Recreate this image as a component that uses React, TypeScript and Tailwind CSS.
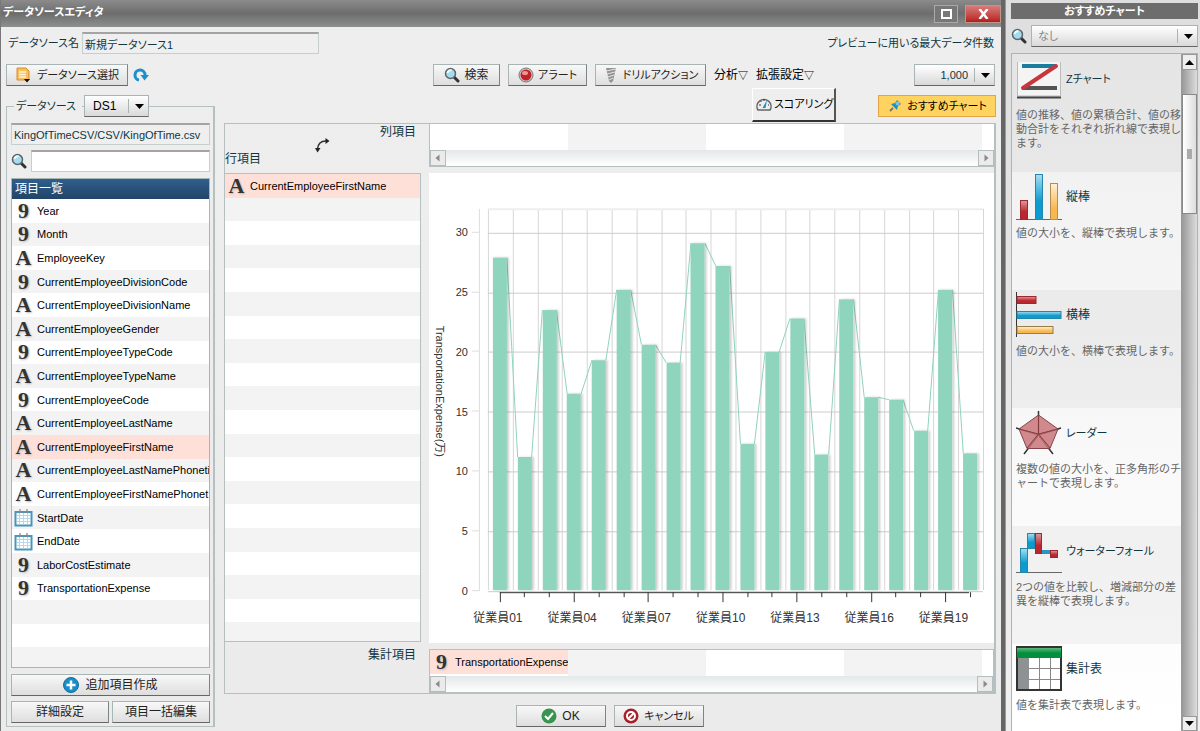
import React from "react";

interface FieldItem {
  kind: "9" | "A" | "date";
  name: string;
}

const fields: FieldItem[] = [
  { kind: "9", name: "Year" },
  { kind: "9", name: "Month" },
  { kind: "A", name: "EmployeeKey" },
  { kind: "9", name: "CurrentEmployeeDivisionCode" },
  { kind: "A", name: "CurrentEmployeeDivisionName" },
  { kind: "A", name: "CurrentEmployeeGender" },
  { kind: "9", name: "CurrentEmployeeTypeCode" },
  { kind: "A", name: "CurrentEmployeeTypeName" },
  { kind: "9", name: "CurrentEmployeeCode" },
  { kind: "A", name: "CurrentEmployeeLastName" },
  { kind: "A", name: "CurrentEmployeeFirstName" },
  { kind: "A", name: "CurrentEmployeeLastNamePhoneti" },
  { kind: "A", name: "CurrentEmployeeFirstNamePhonet" },
  { kind: "date", name: "StartDate" },
  { kind: "date", name: "EndDate" },
  { kind: "9", name: "LaborCostEstimate" },
  { kind: "9", name: "TransportationExpense" },
];

const values = [
  27.9, 11.2, 23.5, 16.5, 19.3, 25.2, 20.6, 19.1, 29.1, 27.2, 12.3, 20, 22.8,
  11.4, 24.4, 16.2, 16, 13.4, 25.2, 11.5,
];

const buttonStyle =
  "flex items-center justify-center whitespace-nowrap border border-t-[#a9b5b5] border-l-[#a9b5b5] border-r-[#7d8585] border-b-[#666] bg-linear-to-b from-[#f8f8f8] to-[#dedede] text-[#222]";
const inputStyle =
  "h-[22px] border border-t-2 border-[#c6cfcf] border-t-[#a3a3a3] px-[2px] text-[#12363f] outline-none";

function FieldIcon({ kind }: { kind: FieldItem["kind"] }) {
  if (kind === "date") {
    return (
      <svg className="w-[19px] h-[19px] shrink-0" viewBox="0 0 19 19">
        <rect x="0.5" y="3" width="18" height="15.5" fill="#4696bd" />
        <rect x="2.5" y="5" width="14" height="11.5" fill="#fff" />
        <path d="M5.5 5v11M9.5 5v11M13.5 5v11M3 7.500h13M3 10.500h13M3 13.500h13" stroke="#b4d9ea" />
        <path d="M6 1v4M13 1v4" stroke="#888" strokeWidth="2" />
        <path d="M6 1v2M13 1v2" stroke="#ddd" />
      </svg>
    );
  }
  return (
    <span className="w-[19px] shrink-0 text-center font-['Liberation_Serif',serif] text-[22px] leading-5 font-bold text-[#333] [text-shadow:1px_1px_2px_#bbb]">
      {kind}
    </span>
  );
}

function FieldRow({ item, index }: { item?: FieldItem; index: number }) {
  const selected = item?.name === "CurrentEmployeeFirstName";
  return (
    <li
      className={`flex items-center gap-1 overflow-hidden pl-[2px] text-[11px] whitespace-nowrap text-black ${
        selected ? "bg-[#ffe0d9]" : index % 2 ? "bg-[#f3f3f3]" : "bg-white"
      }`}
    >
      {item && (
        <>
          <FieldIcon kind={item.kind} />
          <span>{item.name}</span>
        </>
      )}
    </li>
  );
}

function SearchIcon() {
  return (
    <svg className="w-4 h-4 shrink-0" viewBox="0 0 16 16">
      <path d="M9.500 9.500l4.500 4.500" stroke="#333" strokeWidth="3" strokeLinecap="round" />
      <circle cx="6.500" cy="6.500" r="5" fill="#a5dbef" stroke="#5b6468" strokeWidth="1.500" />
      <path d="M3.500 6a3 3 0 0 1 4-2.500" stroke="#eefaff" strokeWidth="2" fill="none" />
    </svg>
  );
}

function Arrow({ className = "" }: { className?: string }) {
  return (
    <svg className={`w-[9px] h-[5px] shrink-0 ${className}`} viewBox="0 0 9 5">
      <path d="M0 0h9L4.500 5z" fill="currentColor" />
    </svg>
  );
}

interface DropdownProps {
  value: string;
  label: string;
  className: string;
  textClass?: string;
}

function Dropdown({ value, label, className, textClass = "" }: DropdownProps) {
  return (
    <div className={`relative flex items-center ${className}`}>
      <select
        aria-label={label}
        className={`h-[22px] w-full appearance-none border border-[#a9b5b5] border-b-[#666] bg-linear-to-b from-white to-[#d9d9d9] ${textClass}`}
      >
        <option>{value}</option>
      </select>
      <span className="pointer-events-none absolute right-[5px] flex h-[14px] items-center border-l border-[#a9b5b5] pl-[6px] text-black">
        <Arrow />
      </span>
    </div>
  );
}

function HScroll() {
  return (
    <div className="flex h-4 justify-between bg-linear-to-b from-[#e4e8e8] to-white">
      {["M9.500 4.500v7L5.500 8z", "M6.500 4.500v7l4-3.500z"].map((d, i) => (
        <button key={d} aria-label={i ? "右へ" : "左へ"} className="h-4 w-4 border border-[#b5bebe] bg-[#ebebeb]">
          <svg className="h-[14px] w-[14px]" viewBox="1 1 14 14">
            <path d={d} fill="#8a8a8a" />
          </svg>
        </button>
      ))}
    </div>
  );
}

function Strip({ item }: { item?: FieldItem }) {
  return (
    <div className="flex min-h-0 flex-1 bg-white">
      <div className={`flex h-6 w-[138px] shrink-0 items-center gap-1 overflow-hidden pl-[2px] text-[11px] text-black ${item ? "bg-[#ffe0d9]" : "bg-white"}`}>
        {item && (
          <>
            <FieldIcon kind={item.kind} />
            <span>{item.name}</span>
          </>
        )}
      </div>
      <div className="h-full max-h-[26px] w-[138px] bg-[#f3f3f3]" />
      <div className="w-[138px]" />
      <div className="h-full max-h-[26px] w-[138px] bg-[#f3f3f3]" />
    </div>
  );
}

function Chart() {
  const x = (i: number) => 64 + i * 24.8;
  const y = (v: number) => 417.5 - v * 11.96;
  return (
    <svg className="min-h-0 w-full flex-1 bg-white" viewBox="0 0 566 469" fontSize="12" fill="#333">
      <defs>
        <filter id="shadow" x="-5%" width="110%">
          <feDropShadow dx="2" dy="0" stdDeviation="1" floodOpacity="0.2" />
        </filter>
      </defs>
      {Array.from({ length: 21 }, (_, i) => (
        <path key={i} d={`M${Math.round(59 + i * 24.8) + 0.5} 35V417`} stroke="#d6d6d6" />
      ))}
      <path d="M59 35.500H555" stroke="#eee" strokeWidth="2" />
      {[0, 5, 10, 15, 20, 25, 30].map((v) => (
        <g key={v}>
          <path d={`M59 ${Math.round(y(v)) + 0.5}H555`} stroke="#ccc" />
          <path d={`M43 ${Math.round(y(v)) - 0.5}h7`} stroke="#ddd" />
          <text x="39" y={y(v) + 4} textAnchor="end" fontSize="11">{v}</text>
        </g>
      ))}
      <path d="M50.500 35V418" stroke="#ddd" />
      {values.slice(1).map((v, i) => (
        <path key={i} d={`M${x(i) + 14} ${y(values[i])}L${x(i + 1)} ${y(v)}`} stroke="#8fd4bc" fill="none" />
      ))}
      <g filter="url(#shadow)">
        {values.map((v, i) => (
          <rect key={i} x={Math.round(x(i))} y={y(v)} width="14" height={417 - y(v)} fill="#8fd4bc" />
        ))}
      </g>
      <path d="M71 419.500H541" stroke="#333" />
      {values.map((_, i) => (
        <path key={i} d={`M${Math.floor(x(i) + 7) + 0.5} 419v${i % 3 ? 5 : 10}`} stroke="#333" />
      ))}
      {[0, 3, 6, 9, 12, 15, 18].map((i) => (
        <text key={i} x={x(i) + 5} y="449" textAnchor="middle">
          {`従業員${String(i + 1).padStart(2, "0")}`}
        </text>
      ))}
      <text transform="translate(7 152) rotate(90)" fontSize="11">TransportationExpense(万)</text>
    </svg>
  );
}

function ChartGlyph({ kind }: { kind: string }) {
  return (
    <svg className="h-[46px] w-[46px] shrink-0" viewBox="0 0 46 46">
      <defs>
        <linearGradient id="red" x2="0" y2="1"><stop stopColor="#e09a9d" /><stop offset="0.6" stopColor="#b92830" /></linearGradient>
        <linearGradient id="blue" x2="0" y2="1"><stop stopColor="#a8dff2" /><stop offset="0.6" stopColor="#0b9bd0" /></linearGradient>
        <linearGradient id="gold" x2="0" y2="1"><stop stopColor="#fff0d8" /><stop offset="0.7" stopColor="#f8b84e" /></linearGradient>
        <linearGradient id="green" x2="0" y2="1"><stop stopColor="#5cba7b" /><stop offset="0.5" stopColor="#008f3d" /></linearGradient>
      </defs>
      {kind === "z" && (
        <>
          <path d="M1.500 6v34h43V6" fill="#f4f4f4" stroke="#bbb" />
          <path d="M1 41.500h44" stroke="#444" strokeWidth="2" />
          <path d="M6 10h34" stroke="#1b7d9e" strokeWidth="4" />
          <path d="M6 32h35" stroke="#555" strokeWidth="4" />
          <path d="M7 32L40 10" stroke="#c9353d" strokeWidth="4" strokeLinecap="round" />
        </>
      )}
      {kind === "bar" && (
        <>
          <path d="M0 45.500h46" stroke="#666" />
          <rect x="4.500" y="26.500" width="7" height="19" fill="url(#red)" stroke="#982a30" />
          <rect x="19.500" y="0.500" width="7" height="45" fill="url(#blue)" stroke="#2586a7" />
          <rect x="34.500" y="9.500" width="7" height="36" fill="url(#gold)" stroke="#b68e4e" />
        </>
      )}
      {kind === "hbar" && (
        <>
          <path d="M0.500 0v45" stroke="#333" />
          <rect x="1" y="4.500" width="19" height="7" fill="url(#red)" stroke="#982a30" />
          <rect x="1" y="19.500" width="44" height="7" fill="url(#blue)" stroke="#2586a7" />
          <rect x="1" y="34.500" width="36" height="7" fill="url(#gold)" stroke="#987c4b" />
        </>
      )}
      {kind === "radar" && (
        <>
          <path d="M22.500 1v24M22.500 25L0 18M22.500 25L45 18M22.500 25L8 44M22.500 25L37 44" stroke="#333" strokeWidth="1.500" />
          <path d="M22.500 5L42 19 34 38.500H11L3 19z" fill="#c9757a" fillOpacity="0.85" stroke="#85454a" />
          <path d="M22.500 5v19M22.500 24L3 19M22.500 24L42 19M22.500 24L11 38M22.500 24L34 38" stroke="#853a40" />
        </>
      )}
      {kind === "fall" && (
        <>
          <path d="M0 44.500h46" stroke="#666" />
          <rect x="4.500" y="20.500" width="7" height="24" fill="url(#blue)" stroke="#2586a7" />
          <rect x="11.500" y="5.500" width="7" height="15" fill="url(#blue)" stroke="#2586a7" />
          <rect x="19.500" y="5.500" width="6" height="20" fill="url(#red)" stroke="#982a30" />
          <rect x="26" y="22" width="8" height="4" fill="#2b96c0" />
          <rect x="34.500" y="22.500" width="7" height="7" fill="url(#red)" stroke="#982a30" />
        </>
      )}
      {kind === "table" && (
        <>
          <rect x="1" y="1" width="44" height="43" fill="#fff" stroke="#333" strokeWidth="2" />
          <rect x="1" y="2" width="44" height="10" fill="url(#green)" />
          <rect x="2" y="12" width="11" height="31" fill="#8f9292" />
          <path d="M23.500 12v31M34.500 12v31M13 22.500h31M13 33.500h31" stroke="#888" />
        </>
      )}
    </svg>
  );
}

const charts = [
  { kind: "z", title: "Zチャート", size: "text-[11px]", text: "値の推移、値の累積合計、値の移動合計をそれぞれ折れ線で表現します。" },
  { kind: "bar", title: "縦棒", size: "", text: "値の大小を、縦棒で表現します。" },
  { kind: "hbar", title: "横棒", size: "", text: "値の大小を、横棒で表現します。" },
  { kind: "radar", title: "レーダー", size: "text-[11px]", text: "複数の値の大小を、正多角形のチャートで表現します。" },
  { kind: "fall", title: "ウォーターフォール", size: "text-[11px]", text: "2つの値を比較し、増減部分の差異を縦棒で表現します。" },
  { kind: "table", title: "集計表", size: "", text: "値を集計表で表現します。" },
];

function Sidebar() {
  return (
    <aside className="flex w-[195px] shrink-0 flex-col gap-[6px] border-l border-[#999] bg-linear-to-b from-[#dedede] to-[#f0f0f0] pt-[3px] pr-[2px] pl-[5px]">
      <h2 className="h-4 bg-[#6d6d6d] text-center text-[11px] leading-4 font-bold text-white">おすすめチャート</h2>
      <div className="flex shrink-0 items-center gap-1">
        <SearchIcon />
        <Dropdown value="なし" label="チャート種別" className="flex-1" textClass="pl-[6px] text-[#888] text-[11px]" />
      </div>
      <div className="flex min-h-0 flex-1 border border-b-0 border-[#a9b5b5]">
        <ul className="min-w-0 flex-1 overflow-hidden bg-linear-to-b from-[#efefef] to-white">
          {charts.map((c, i) => (
            <li key={c.kind} className={`h-[118px] pt-[2px] pl-1 ${i % 2 ? "" : "bg-black/4"}`}>
              <div className="flex items-center gap-1 text-[#12363f]">
                <ChartGlyph kind={c.kind} />
                <h3 className={c.size}>{c.title}</h3>
              </div>
              <p className="mt-[6px] text-[11px] leading-[14px] text-[#666] [font-feature-settings:normal] [line-break:anywhere]">{c.text}</p>
            </li>
          ))}
        </ul>
        <div className="flex w-4 flex-col border-l border-[#999] bg-linear-to-r from-[#999] to-[#ddd]">
          <button aria-label="上へ" className="flex h-4 items-center justify-center border border-[#999] bg-[#eee]">
            <Arrow className="rotate-180" />
          </button>
          <div className="mt-6 flex h-[120px] items-center justify-center border border-[#888] bg-linear-to-r from-white to-[#ddd]">
            <span className="h-[10px] w-[5px] bg-[#aaa]" />
          </div>
          <button aria-label="下へ" className="mt-auto flex h-[15px] items-center justify-center border border-[#999] bg-[#eee]">
            <Arrow />
          </button>
        </div>
      </div>
    </aside>
  );
}

function SourcePanel() {
  return (
    <section className="relative flex w-[209px] shrink-0 flex-col pb-1">
      <div className="absolute inset-x-0 top-[11px] bottom-0 border border-r-2 border-[#b5c0c0]" />
      <div className="relative ml-2 flex h-[22px] w-max items-center text-[#12363f]">
        <span className="bg-[#ededed] pr-[6px] pl-[2px] text-[11px]">データソース</span>
        <Dropdown value="DS1" label="データソース" className="ml-[2px] w-[65px]" textClass="pl-2 text-black" />
      </div>
      <div className="relative flex min-h-0 flex-1 flex-col px-[5px]">
        <input aria-label="パス" defaultValue="KingOfTimeCSV/CSV/KingOfTime.csv" className={`mt-[6px] w-full bg-[#efefef] text-[11px] ${inputStyle}`} />
        <div className="mt-[5px] flex items-center gap-1">
          <SearchIcon />
          <input aria-label="項目検索" className={`min-w-0 flex-1 bg-white ${inputStyle}`} />
        </div>
        <div className="mt-[6px] flex min-h-0 flex-1 flex-col border border-[#a9b5b5] bg-white">
          <h3 className="h-5 shrink-0 bg-linear-to-b from-[#305f8c] to-[#214468] pl-[3px] leading-5 text-white">項目一覧</h3>
          <div className="min-h-0 flex-1 overflow-hidden">
            <ul className="grid h-[472px] auto-rows-fr">
              {Array.from({ length: 20 }, (_, i) => (
                <FieldRow key={i} item={fields[i]} index={i} />
              ))}
            </ul>
          </div>
        </div>
        <button className={`mt-[6px] h-[22px] shrink-0 gap-[6px] ${buttonStyle}`}>
          <svg className="h-4 w-4" viewBox="0 0 16 16">
            <circle cx="8" cy="8" r="7.500" fill="#168fc9" stroke="#126b99" />
            <path d="M8 3.500v9M3.500 8h9" stroke="#fff" strokeWidth="2.500" />
          </svg>
          追加項目作成
        </button>
        <div className="mt-[5px] grid grid-cols-2 gap-[3px]">
          <button className={`h-[22px] ${buttonStyle}`}>詳細設定</button>
          <button className={`h-[22px] ${buttonStyle}`}>項目一括編集</button>
        </div>
      </div>
    </section>
  );
}

function Workspace() {
  return (
    <div className="flex min-h-0 flex-1 border border-r-2 border-[#b5c0c0]">
      <div className="flex w-[196px] shrink-0 flex-col text-[#12363f]">
        <div className="relative flex h-[49px] shrink-0 items-end justify-between pb-[6px]">
          <span>行項目</span>
          <svg className="absolute top-[14px] left-[90px] h-[15px] w-[15px]" viewBox="0 0 15 15">
            <path d="M2.500 11C3 6 6 2.500 12 3" fill="none" stroke="#333" strokeWidth="1.500" />
            <path d="M10.500 0l4 3-4 3zM0 10h5.500l-3 4.500z" fill="#222" />
          </svg>
          <span className="self-start px-[5px]">列項目</span>
        </div>
        <div className="min-h-0 flex-1 overflow-hidden border border-l-0 border-[#b5c0c0]">
          <ul className="grid h-[472px] auto-rows-fr">
            {Array.from({ length: 20 }, (_, i) => (
              <FieldRow key={i} item={i ? undefined : fields[10]} index={i} />
            ))}
          </ul>
        </div>
        <div className="h-[51px] shrink-0 px-[5px] pt-[5px] text-right">集計項目</div>
      </div>
      <div className="ml-2 flex min-w-0 flex-1 flex-col">
        <div className="flex h-[43px] shrink-0 flex-col border-b border-l border-[#b5c0c0]">
          <Strip />
          <HScroll />
        </div>
        <div className="mt-[6px] mb-[6px] flex min-h-0 flex-1 flex-col">
          <Chart />
        </div>
        <div className="flex h-[44px] shrink-0 flex-col border border-[#b5c0c0]">
          <Strip item={fields[16]} />
          <HScroll />
        </div>
      </div>
    </div>
  );
}

function Toolbar() {
  return (
    <div className="mt-[10px] flex h-[22px] shrink-0 items-center whitespace-nowrap text-black">
      <button className={`h-[22px] w-[122px] gap-[6px] text-[11px] ${buttonStyle}`}>
        <svg className="h-4 w-4" viewBox="0 0 16 16">
          <path d="M2 1h9l3 3v9H2z" fill="#f9be59" stroke="#d58e34" />
          <path d="M4 5h7M4 7.500h7M4 10h7" stroke="#fff4d8" strokeWidth="1.500" />
          <path d="M9 12h6l-3 3.500z" fill="#111" />
        </svg>
        データソース選択
      </button>
      <button aria-label="更新" className="ml-[5px]">
        <svg className="h-4 w-4" viewBox="0 0 16 16">
          <path d="M6 13A5 5 0 1 1 12 8" fill="none" stroke="#1d8fcb" strokeWidth="3" />
          <path d="M7.500 8h8.500l-4.500 5.500z" fill="#1d8fcb" />
        </svg>
      </button>
      <div className="ml-[284px] flex items-center">
        <button className={`h-[22px] w-[67px] gap-1 ${buttonStyle}`}>
          <SearchIcon />
          検索
        </button>
        <button className={`ml-2 h-[22px] w-[79px] gap-1 text-[11px] ${buttonStyle}`}>
          <svg className="h-4 w-4" viewBox="0 0 16 16">
            <circle cx="8" cy="8" r="7" fill="#ccc" stroke="#777" />
            <circle cx="8" cy="8" r="5.500" fill="#bf2329" />
            <ellipse cx="7" cy="6" rx="3" ry="2" fill="#f09392" />
          </svg>
          アラート
        </button>
        <button className={`ml-2 h-[22px] w-[111px] gap-1 text-[11px] ${buttonStyle}`}>
          <svg className="h-4 w-4 shrink-0" viewBox="0 0 16 16">
            <path d="M3 1h10l-3 13-2 2-2-2z" fill="#929292" />
            <path d="M3 4l10-2M4 7l8-2M5 10l6-2M6 13l4-2" stroke="#e5e5e5" />
          </svg>
          ドリルアクション
        </button>
        <button className="ml-2">分析<span className="text-[10px]">▽</span></button>
        <div className="relative ml-2">
          <button>拡張設定<span className="text-[10px]">▽</span></button>
          <button className="absolute top-[21px] left-[-4px] z-10 flex h-[34px] w-[84px] items-center gap-[2px] border border-white border-r-2 border-b-2 border-r-[#555] border-b-[#333] bg-[#eee] pl-[3px] text-[11px]">
            <svg className="h-4 w-4 shrink-0" viewBox="0 0 16 16">
              <path d="M2 14a7 7 0 1 1 12 0z" fill="#eee" stroke="#666" strokeWidth="1.500" />
              <path d="M3 9h2M4.500 5l1 1M8 3v2M12 9h1" stroke="#333" />
              <path d="M11 4L9.500 12h-3z" fill="#168fc9" />
            </svg>
            スコアリング
          </button>
        </div>
      </div>
      <Dropdown value="1,000" label="最大データ件数" className="mr-[1px] ml-auto w-[81px]" textClass="pr-[26px] text-right text-[11px] text-[#12363f]" />
    </div>
  );
}

export default function App() {
  return (
    <div className="flex h-screen w-full overflow-hidden bg-[#ededed] font-['Liberation_Sans','Noto_Sans_CJK_JP',sans-serif] text-[12px] leading-4 [font-feature-settings:'palt']">
      <main className="flex min-w-0 flex-1 flex-col border-r-4 border-l border-r-[#666] border-l-[#777]">
        <header className="flex h-[27px] shrink-0 items-center justify-between bg-linear-to-b from-[#8b8b8b] via-[#6d6d6d] to-[#8e9090] pl-[2px] text-white">
          <h1 className="pb-1 text-[11px] font-bold">データソースエディタ</h1>
          <div className="flex gap-[7px]">
            <button aria-label="最大化" className="flex h-[18px] w-[24px] items-center justify-center border border-[#aaa] bg-[#777]">
              <span className="h-[10px] w-[11px] border-2 border-white" />
            </button>
            <button aria-label="閉じる" className="flex h-[18px] w-[36px] items-center justify-center border border-[#b98] bg-linear-to-b from-[#d67a7a] to-[#b5191d]">
              <svg className="h-[10px] w-[11px]" viewBox="0 0 11 10">
                <path d="M1.500 0l8 10M9.500 0l-8 10" stroke="#fff" strokeWidth="2.500" />
              </svg>
            </button>
          </div>
        </header>
        <div className="flex min-h-0 flex-1 flex-col bg-linear-to-b from-[#eee] to-[#ebebeb] pt-[5px] pr-[5px] pb-1 pl-[5px]">
          <div className="flex shrink-0 items-center whitespace-nowrap text-[#12363f]">
            <label htmlFor="sourceName" className="w-[76px] pl-[2px] text-[11px]">データソース名</label>
            <input id="sourceName" defaultValue="新規データソース1" className={`w-[237px] bg-[#efefef] text-[11px] ${inputStyle}`} />
            <span className="mr-[2px] ml-auto text-[11px]">プレビューに用いる最大データ件数</span>
          </div>
          <Toolbar />
          <div className="mt-[9px] flex min-h-0 flex-1 gap-[9px]">
            <SourcePanel />
            <div className="flex min-w-0 flex-1 flex-col">
              <button className="mb-[6px] ml-auto flex h-[22px] w-[118px] shrink-0 items-center justify-center gap-1 border border-[#e2a546] bg-[#ffd35f] text-[11px] text-black">
                <svg className="h-4 w-4" viewBox="0 0 16 16">
                  <path d="M3 13l3-3" stroke="#777" strokeWidth="2" />
                  <path d="M4 6l6 6 1-4 3-2-4-4-2 3z" fill="#278fc0" />
                  <circle cx="10.500" cy="5.500" r="2" fill="#7cc6e4" />
                </svg>
                おすすめチャート
              </button>
              <Workspace />
              <div className="mt-[11px] mr-[1px] flex shrink-0 justify-center gap-2">
                <button className={`h-[22px] w-[90px] gap-[5px] ${buttonStyle}`}>
                  <svg className="h-4 w-4" viewBox="0 0 16 16">
                    <circle cx="8" cy="8" r="7.500" fill="#389450" />
                    <path d="M4 8l3 3 5-6" stroke="#fff" strokeWidth="2" fill="none" />
                  </svg>
                  OK
                </button>
                <button className={`h-[22px] w-[90px] gap-[5px] text-[11px] ${buttonStyle}`}>
                  <svg className="h-4 w-4" viewBox="0 0 16 16">
                    <circle cx="8" cy="8" r="7.500" fill="#a91f28" />
                    <circle cx="8" cy="8" r="4" stroke="#fff" strokeWidth="2" fill="none" />
                    <path d="M5 11l6-6" stroke="#fff" strokeWidth="2" />
                  </svg>
                  キャンセル
                </button>
              </div>
            </div>
          </div>
        </div>
      </main>
      <Sidebar />
    </div>
  );
}
